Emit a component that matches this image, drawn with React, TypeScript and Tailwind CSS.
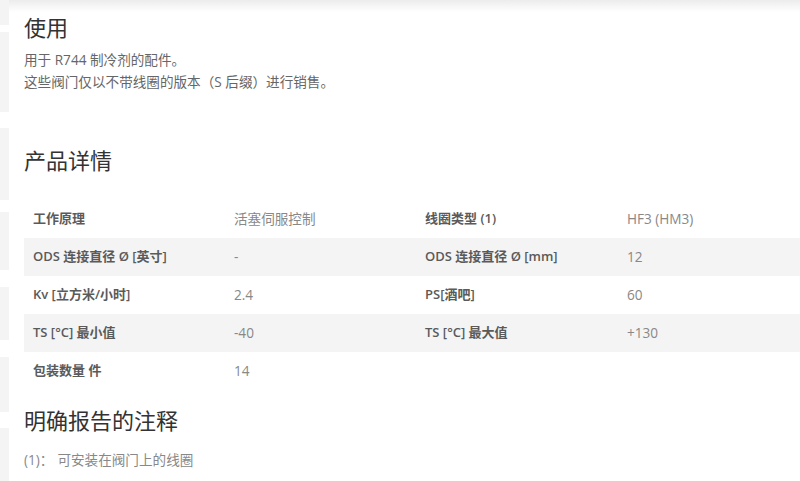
const font = { fontFamily: '"Open Sans", "Noto Sans CJK SC", sans-serif' } as const;

const rows: [string, string, string, string][] = [
  ["工作原理", "活塞伺服控制", "线圈类型 (1)", "HF3 (HM3)"],
  ["ODS 连接直径 Ø [英寸]", "-", "ODS 连接直径 Ø [mm]", "12"],
  ["Kv [立方米/小时]", "2.4", "PS[酒吧]", "60"],
  ["TS [°C] 最小值", "-40", "TS [°C] 最大值", "+130"],
  ["包装数量 件", "14", "", ""],
];

// faint blocks of the side rail, top offset and height
const rail = [
  [0, 25],
  [32, 80],
  [128, 72],
  [212, 58],
  [287, 53],
  [357, 55],
  [428, 53],
];

export default function App() {
  return (
    <div className="relative flex h-[481px] w-[800px] overflow-hidden bg-white" style={font}>
      {/* side rail */}
      <div className="relative w-[9px] shrink-0">
        {rail.map(([top, h]) => (
          <div key={top} className="absolute left-0 w-[9px] bg-[#f4f4f4]" style={{ top, height: h }} />
        ))}
      </div>

      <div className="relative flex-1 pl-[15px]">
        <div className="pointer-events-none absolute inset-x-0 top-0 h-[12px] bg-gradient-to-b from-[#ececec] to-white" />

        <h2 className="relative mt-[12px] text-[22px] leading-[30px] font-normal text-[#333]">使用</h2>
        <div className="mt-[7px] text-[13.6px] leading-[22px] text-[#666]">
          <p>用于 R744 制冷剂的配件。</p>
          <p>这些阀门仅以不带线圈的版本（S 后缀）进行销售。</p>
        </div>

        <h2 className="mt-[52px] text-[22px] leading-[30px] font-normal text-[#333]">产品详情</h2>

        <div className="mt-[25px]">
          {rows.map((r, i) => (
            <div
              key={i}
              className={`grid h-[38px] grid-cols-[201px_191px_202px_1fr] items-center ${
                i % 2 === 1 ? "bg-[#f4f4f4]" : ""
              }`}
            >
              <div className="pl-[9px] text-[13px] font-semibold text-[#5a5a5a]">{r[0]}</div>
              <div className="pl-[9px] text-[13.6px] text-[#888]">{r[1]}</div>
              <div className="pl-[9px] text-[13px] font-semibold text-[#5a5a5a]">{r[2]}</div>
              <div className="pl-[9px] text-[13.6px] text-[#888]">{r[3]}</div>
            </div>
          ))}
        </div>

        <h2 className="mt-[15px] text-[22px] leading-[30px] font-normal text-[#333]">明确报告的注释</h2>
        <p className="mt-[14px] text-[13.6px] leading-[22px] text-[#888]">
          (1)：<span className="ml-[4px]">可安装在阀门上的线圈</span>
        </p>
      </div>
    </div>
  );
}
